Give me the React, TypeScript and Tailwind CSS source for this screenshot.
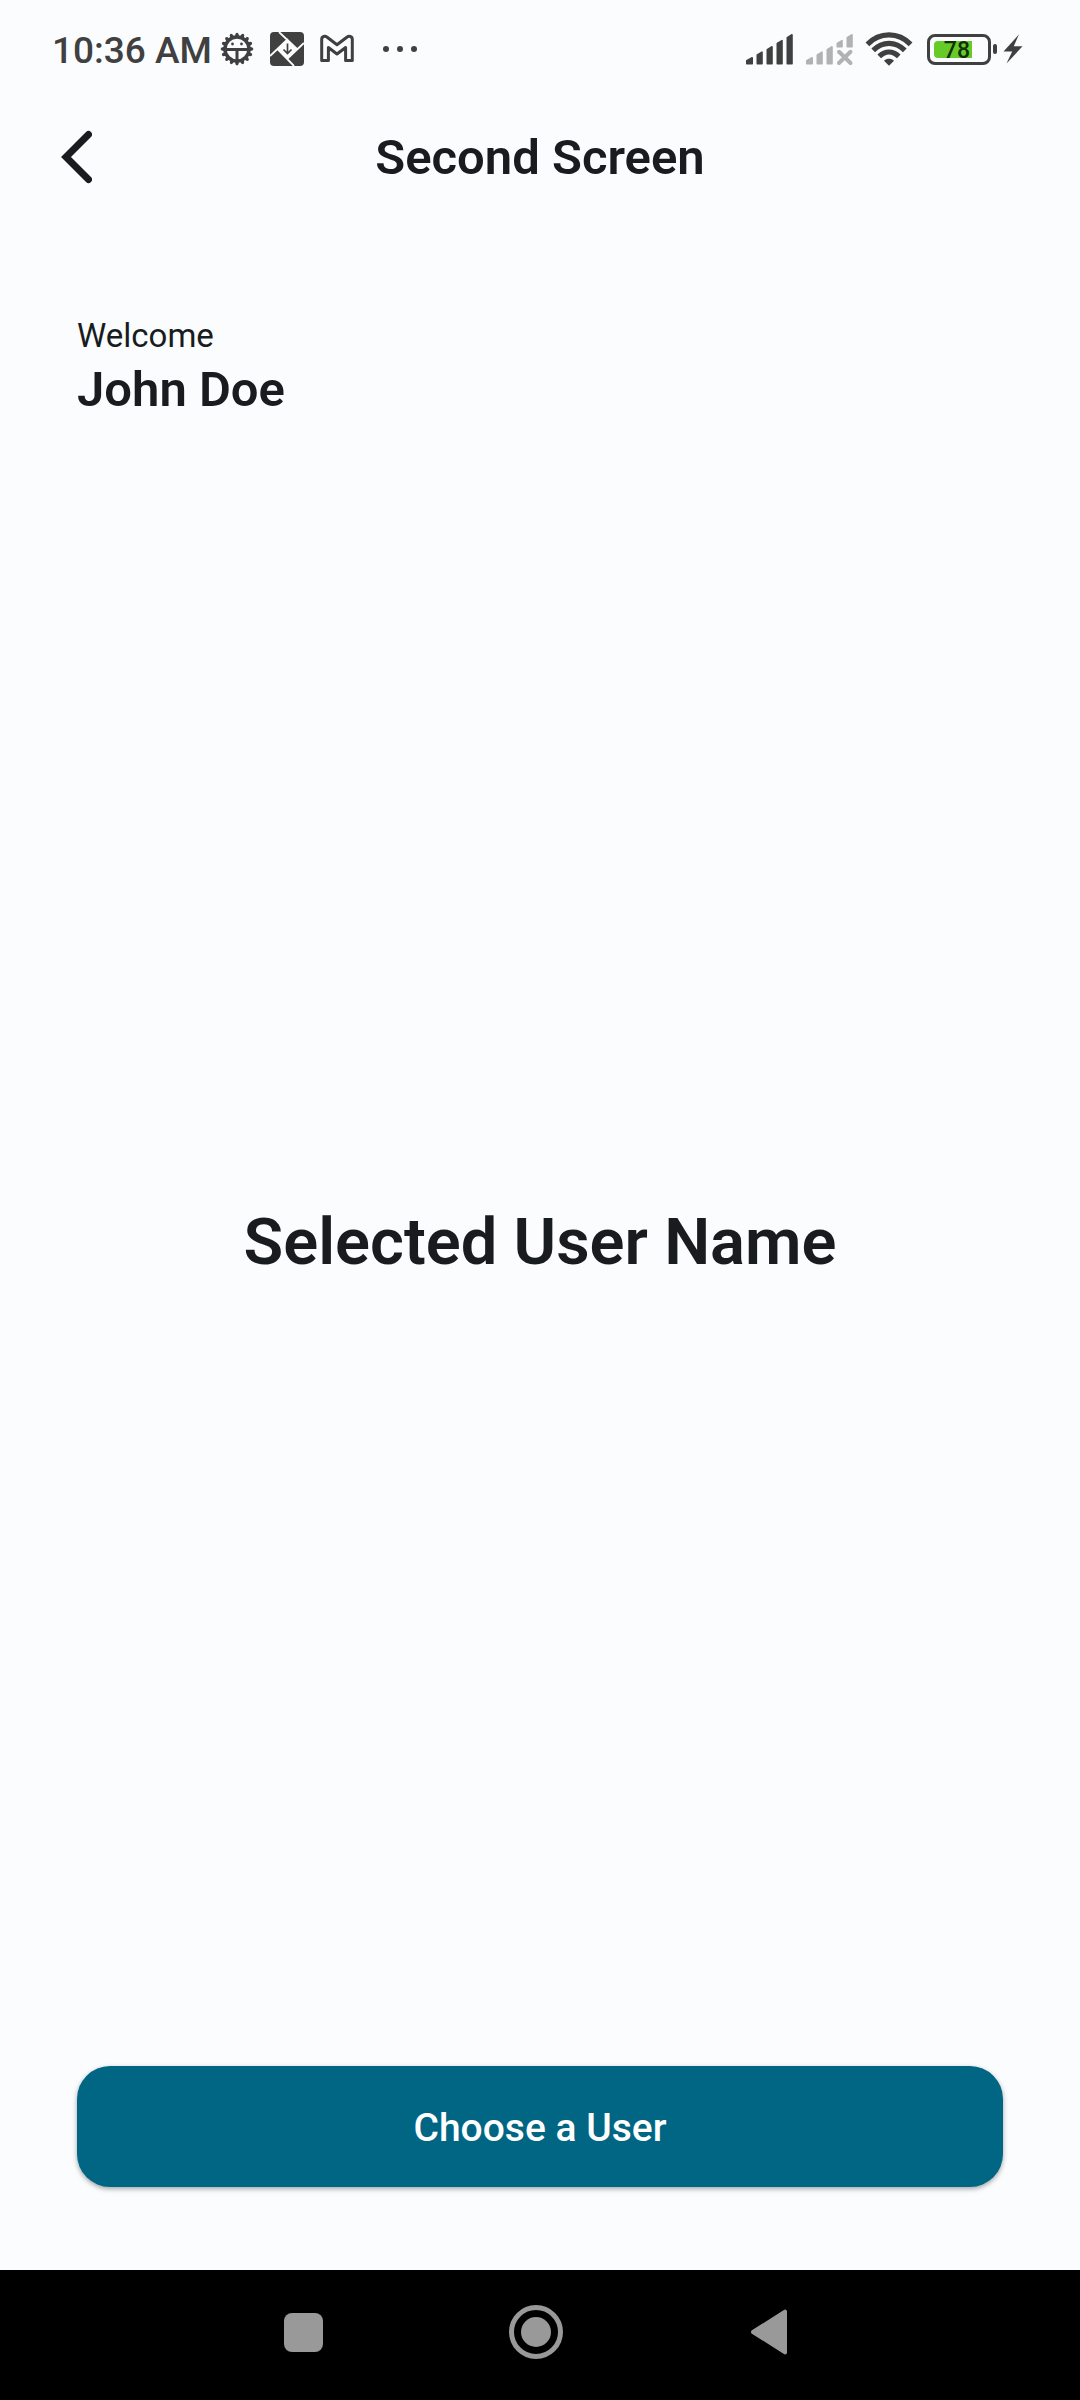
const INK = '#404040';

function GearIcon() {
  const teeth = Array.from({ length: 16 }, (_, i) => i * 22.5);
  return (
    <svg viewBox="0 0 34 34" className="size-[34px]" aria-hidden="true">
      {teeth.map((a) => (
        <path key={a} d="M14.6 5.5 L15.6 1.6 Q17 -0.2 18.4 1.6 L19.4 5.5 Z" fill={INK} transform={`rotate(${a} 17 17)`} />
      ))}
      <circle cx="17" cy="17" r="12" fill="none" stroke={INK} strokeWidth="3.4" />
      <path d="M5 17.4 H29 M17 17.4 V29" stroke={INK} strokeWidth="3" />
      <circle cx="12.5" cy="12" r="1.4" fill={INK} />
      <circle cx="21.5" cy="12" r="1.4" fill={INK} />
    </svg>
  );
}

function DownloadTileIcon() {
  return (
    <svg viewBox="0 0 34 34" className="size-[34px]" aria-hidden="true">
      <rect width="34" height="34" rx="4" fill={INK} />
      <path d="M17.5 7 L27.5 17 L17.5 27 L7.5 17 Z" fill="#fbfcfe" />
      <path d="M9 0 L27.5 17.5 M34 11 L17 27 M24 34 L7.5 17 M0 24 L18 7" stroke="#fbfcfe" strokeWidth="1.8" />
      <path d="M17.5 11.5 V21.5 M13.5 17.5 L17.5 21.5 L21.5 17.5" fill="none" stroke={INK} strokeWidth="1.7" />
    </svg>
  );
}

function MailIcon() {
  return (
    <svg viewBox="0 0 34 34" className="size-[34px]" aria-hidden="true">
      <path
        d="M1.7 28.5 V7.5 C1.7 4.2 5 3.6 7.2 5.2 L17 12.8 L26.8 5.2 C29 3.6 32.3 4.2 32.3 7.5 V28.5 H25.6 V15.5 L17 22 L8.4 15.5 V28.5 Z"
        fill="none"
        stroke={INK}
        strokeWidth="3"
        strokeLinejoin="round"
      />
    </svg>
  );
}

function MoreIcon() {
  return (
    <svg viewBox="0 0 36 34" className="h-[34px] w-9" fill={INK} aria-hidden="true">
      <circle cx="4" cy="17" r="3" />
      <circle cx="18" cy="17" r="3" />
      <circle cx="32" cy="17" r="3" />
    </svg>
  );
}

function SignalIcon() {
  return (
    <svg viewBox="0 0 50 34" className="h-[34px] w-[50px]" fill={INK} stroke={INK} strokeWidth="1.6" strokeLinejoin="round" aria-hidden="true">
      <path d="M1.8 31.8 V28.8 L7.2 25.8 V31.8 Z" />
      <path d="M12.3 31.8 V23 L17 20.2 V31.8 Z" />
      <path d="M22.3 31.8 V17.6 L27 14.8 V31.8 Z" />
      <path d="M32.3 31.8 V11.4 L37 8.6 V31.8 Z" />
      <path d="M42.3 31.8 V5.6 L47 2.8 V31.8 Z" />
    </svg>
  );
}

function NoSignalIcon() {
  return (
    <svg viewBox="0 0 50 34" className="h-[34px] w-[50px]" fill="#b2b2b3" stroke="#b2b2b3" strokeWidth="1.6" strokeLinejoin="round" aria-hidden="true">
      <path d="M1.8 31.8 V28.8 L7.2 25.8 V31.8 Z" />
      <path d="M12.3 31.8 V23 L17 20.2 V31.8 Z" />
      <path d="M22.3 31.8 V17.6 L27 14.8 V31.8 Z" />
      <path d="M32.3 14.8 V11.4 L37 8.6 V14.8 Z" />
      <path d="M42.3 14.8 V5.6 L47 2.8 V14.8 Z" />
      <path d="M34 19.8 L45.5 31 M45.5 19.8 L34 31" strokeWidth="4" strokeLinecap="round" />
    </svg>
  );
}

function WifiIcon() {
  return (
    <svg viewBox="0 0 48 34" className="h-[34px] w-12" fill="none" stroke={INK} strokeWidth="5.2" aria-hidden="true">
      <path d="M2.4 12.4 C14.5 -0.2 33.5 -0.2 45.6 12.4" />
      <path d="M8.2 18.4 C17.5 9 30.5 9 39.8 18.4" />
      <path d="M14.2 24.4 C20.2 18.7 27.8 18.7 33.8 24.4" />
      <path d="M24 33.8 L19 28.8 C22 26.2 26 26.2 29 28.8 Z" fill={INK} stroke="none" />
    </svg>
  );
}

function Battery() {
  return (
    <div className="flex items-center gap-0.5">
      <div className="h-[31px] w-16 rounded-lg border-3 border-[#404040] p-1">
        <div className="flex h-full w-[38px] items-center justify-end rounded-l-sm bg-[#66cb29] pt-0.5 pr-0.5 text-[23px] leading-none font-medium text-[#123006]">
          78
        </div>
      </div>
      <div className="h-2.5 w-1 rounded-xs bg-[#404040]" />
    </div>
  );
}

function BoltIcon() {
  return (
    <svg viewBox="0 0 20 30" className="h-[30px] w-5" fill={INK} aria-hidden="true">
      <path d="M16 0.3 L0.5 17.5 L9.2 17.5 L3.5 29.5 L19.5 12.3 L10.8 12.3 Z" />
    </svg>
  );
}

function StatusBar() {
  return (
    <div className="flex h-20 items-center justify-between pt-[18px] pr-[57px] pl-[52px] text-[#404040]">
      <div className="flex items-center">
        <time className="mr-2 pt-0.5 text-[37px] leading-none font-medium">10:36 AM</time>
        <div className="flex items-center gap-4">
          <GearIcon />
          <DownloadTileIcon />
          <MailIcon />
        </div>
        <div className="ml-7 flex">
          <MoreIcon />
        </div>
      </div>
      <div className="flex items-center gap-2.5">
        <SignalIcon />
        <NoSignalIcon />
        <WifiIcon />
        <div className="ml-1 flex items-center gap-1.5">
          <Battery />
          <BoltIcon />
        </div>
      </div>
    </div>
  );
}

function SystemNav() {
  const button = 'flex h-20 w-20 items-center justify-center';
  return (
    <nav aria-label="System" className="flex h-[130px] items-center justify-center gap-[153px] bg-black pr-2 pb-1.5">
      <button type="button" aria-label="Recent apps" className={button}>
        <span className="size-[39px] rounded-lg bg-[#999999]" />
      </button>
      <button type="button" aria-label="Home" className={button}>
        <span className="flex size-[54px] items-center justify-center rounded-full border-5 border-[#999999]">
          <span className="size-[30px] rounded-full bg-[#999999]" />
        </span>
      </button>
      <button type="button" aria-label="Back" className={button}>
        <svg viewBox="0 0 38 46" className="h-[46px] w-[38px]" fill="#999999" stroke="#999999" strokeWidth="4" strokeLinejoin="round" aria-hidden="true">
          <path d="M3 23 L35 2.6 V43.4 Z" />
        </svg>
      </button>
    </nav>
  );
}

export default function App() {
  return (
    <div className="flex min-h-screen flex-col bg-[#fbfcfe] font-['Roboto',sans-serif] text-[#191c1e]">
      <StatusBar />
      <header className="grid h-[154px] grid-cols-[1fr_auto_1fr] items-center px-9">
        <button type="button" aria-label="Go back" className="flex size-20 items-center justify-center">
          <svg viewBox="0 0 32 54" className="h-[54px] w-8" fill="none" stroke="#191c1e" strokeWidth="7" strokeLinecap="round" aria-hidden="true">
            <path d="M28.5 4.5 L6 27 L28.5 49.5" strokeLinejoin="miter" />
          </svg>
        </button>
        <h1 className="text-[49px] leading-none font-semibold">Second Screen</h1>
      </header>
      <main className="flex flex-1 flex-col px-[77px] pt-20 pb-[83px]">
        <p className="text-[33px] leading-[44px]">Welcome</p>
        <p className="text-[49px] leading-[64px] font-semibold">John Doe</p>
        <div className="flex flex-1 items-center justify-center pb-1">
          <h2 className="text-center text-[65px] leading-[80px] font-semibold">Selected User Name</h2>
        </div>
        <button
          type="button"
          className="h-[121px] w-full rounded-[33px] bg-[#006684] pt-1 text-[39px] font-medium text-white shadow-[0_2px_5px_rgba(0,0,0,0.35)]"
        >
          Choose a User
        </button>
      </main>
      <SystemNav />
    </div>
  );
}
